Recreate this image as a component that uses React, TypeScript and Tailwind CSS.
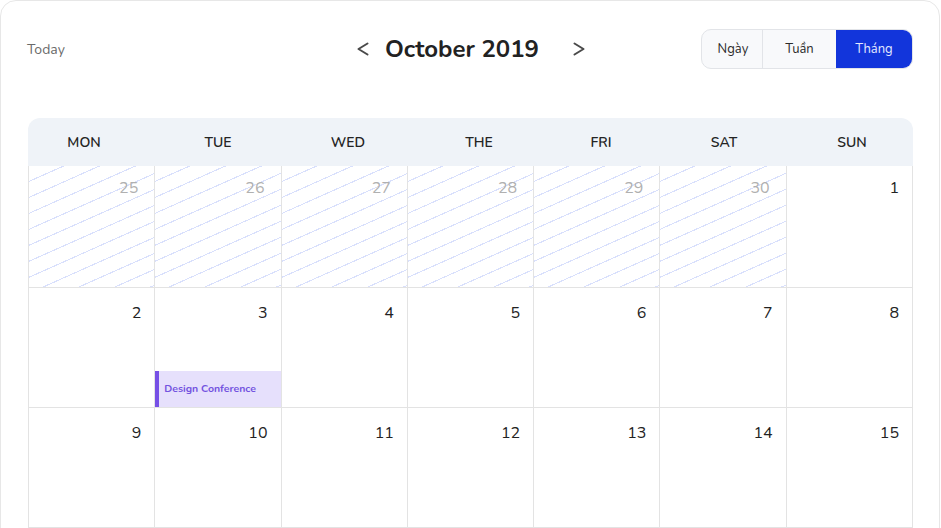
import React from "react";

const days = ["MON", "TUE", "WED", "THE", "FRI", "SAT", "SUN"];

type Cell = { n: number; muted?: boolean; event?: string };

const rows: Cell[][] = [
  [
    { n: 25, muted: true },
    { n: 26, muted: true },
    { n: 27, muted: true },
    { n: 28, muted: true },
    { n: 29, muted: true },
    { n: 30, muted: true },
    { n: 1 },
  ],
  [
    { n: 2 },
    { n: 3, event: "Design Conference" },
    { n: 4 },
    { n: 5 },
    { n: 6 },
    { n: 7 },
    { n: 8 },
  ],
  [{ n: 9 }, { n: 10 }, { n: 11 }, { n: 12 }, { n: 13 }, { n: 14 }, { n: 15 }],
];

function Chevron({ dir }: { dir: "left" | "right" }) {
  return (
    <svg width="12" height="16" viewBox="0 0 12 16" fill="none">
      {dir === "left" ? (
        <polyline points="10.5,2.5 1.5,8 10.5,13.5" stroke="#4a4a4a" strokeWidth="2" strokeLinecap="round" strokeLinejoin="round" />
      ) : (
        <polyline points="1.5,2.5 10.5,8 1.5,13.5" stroke="#4a4a4a" strokeWidth="2" strokeLinecap="round" strokeLinejoin="round" />
      )}
    </svg>
  );
}

export default function App() {
  return (
    <div
      className="w-[941px] h-[528px] overflow-hidden bg-white"
      style={{ fontFamily: '"Nunito", "Noto Sans", "Open Sans", sans-serif' }}
    >
      <div className="w-[940px] h-[560px] rounded-[16px] border border-[#e7e7e7] bg-white pl-[27px] pr-[26px] pt-[28px]">
        {/* Top bar */}
        <div className="grid grid-cols-[1fr_auto_1fr] items-center h-[40px]">
          <div className="text-[14px] text-[#6a6a6a] -ml-[1px] pt-[1px]">Today</div>
          <div className="flex items-center pl-[1px]">
            <Chevron dir="left" />
            <div className="ml-[16px] mr-[34px] text-[24px] font-bold text-[#222] leading-none">October 2019</div>
            <Chevron dir="right" />
          </div>
          <div className="flex justify-end pl-[1px]">
            <div className="flex h-[40px] rounded-[10px] border border-[#e2e4e8] bg-[#f8f9fb] overflow-hidden text-[13px]">
              <div className="w-[61px] flex items-center justify-center pt-[2px] pl-[2px] text-[#2a2a2a] border-r border-[#e2e4e8]">Ngày</div>
              <div className="w-[73px] flex items-center justify-center pt-[2px] text-[#2a2a2a]">Tuần</div>
              <div className="w-[76px] flex items-center justify-center pt-[2px] text-[#e4e9ff] bg-[#1235db]">Tháng</div>
            </div>
          </div>
        </div>

        {/* Calendar */}
        <div className="mt-[49px]">
          <div className="grid grid-cols-[112px_156px_104px_158px_86px_160px_96px] h-[48px] bg-[#eff3f8] rounded-t-[12px]">
            {days.map((d) => (
              <div key={d} className="flex items-center justify-center text-[14px] font-semibold text-[#242424]">
                {d}
              </div>
            ))}
          </div>
          <div className="grid grid-cols-7 border-l border-[#e3e3e3]">
            {rows.map((row, ri) =>
              row.map((c, ci) => (
                <div
                  key={`${ri}-${ci}`}
                  className={`relative border-r border-b border-[#e3e3e3] ${ri === 0 ? "h-[122px]" : "h-[120px]"} ${
                    c.muted
                      ? "bg-[repeating-linear-gradient(156deg,transparent_0px,transparent_13.5px,#d9e0fc_13.5px,#d9e0fc_14.6px)]"
                      : "bg-white"
                  }`}
                >
                  <div
                    className={`absolute text-[16px] ${ri === 0 ? "top-[10px]" : "top-[13px]"} ${
                      c.muted ? "right-[16px] text-[#b0b0b0]" : "right-[13px] text-[#222]"
                    }`}
                  >
                    {c.n}
                  </div>
                  {c.event && (
                    <div className="absolute left-0 right-0 bottom-0 h-[36px] bg-[#e6e0fc] border-l-[4px] border-[#7650e6] flex items-center pl-[5px] text-[10.5px] font-bold text-[#7353e0]">
                      {c.event}
                    </div>
                  )}
                </div>
              ))
            )}
          </div>
        </div>
      </div>
    </div>
  );
}
